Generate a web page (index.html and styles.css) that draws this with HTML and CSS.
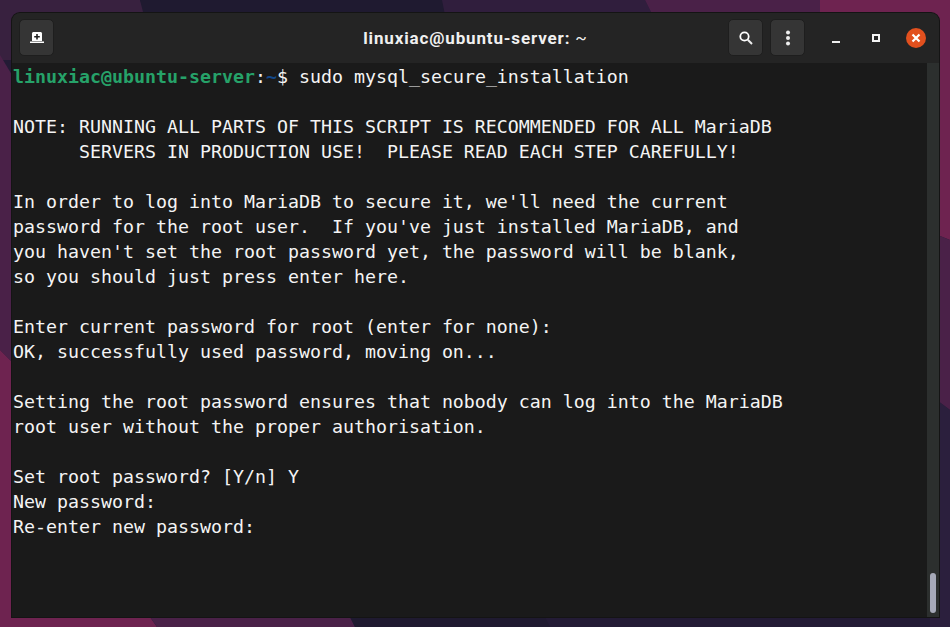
FILE: index.html
```html
<!DOCTYPE html>
<html lang="en">
<head>
<meta charset="utf-8">
<title>linuxiac@ubuntu-server: ~</title>
<link rel="stylesheet" href="styles.css">
</head>
<body>
<svg class="backdrop" width="950" height="627" viewBox="0 0 950 627">
  <rect width="950" height="627" fill="#231b35"/>
  <path fill="#38213f" d="M0 0H140L155 40V60H0z"/>
  <path fill="#1f1a30" d="M140 0H442L470 40V60H155z"/>
  <path fill="#301e3d" d="M442 0H645L665 40H450z"/>
  <path fill="#4a2148" d="M645 0H820L825 40H665z"/>
  <path fill="#6e2350" d="M820 0H950V240L930 232H820z"/>
  <path fill="#4a2148" d="M930 232L950 240V410L930 395z"/>
  <path fill="#2b1f3d" d="M930 395L950 410V627H930z"/>
  <path fill="#4a2148" d="M0 55L15 80V365L0 350z"/>
  <path fill="#6e2350" d="M0 350L15 365V617H150L157 627H0z"/>
  <path fill="#4a2148" d="M150 617H350L355 627H157z"/>
  <path fill="#1f1a30" d="M350 617H545L550 627H355z"/>
</svg>
<main class="window">
  <header class="titlebar">
    <button class="tool-btn" aria-label="New tab">
      <svg width="16" height="16" viewBox="0 0 16 16"><path fill="#fff" d="M3 3.500C3 2.700 3.700 2 4.500 2h7c.8 0 1.500.7 1.500 1.500V11H3z"/><path fill="#fff" d="M1 11.500h14V13H1z"/><path fill="#222" d="M7.200 4h1.600v2h2v1.600h-2v2H7.200v-2h-2V6h2z"/></svg>
    </button>
    <h1 class="title">linuxiac@ubuntu-server: <span class="title-tilde">~</span></h1>
    <div class="actions">
      <button class="tool-btn" aria-label="Search">
        <svg width="16" height="16" viewBox="0 0 16 16"><circle cx="6.500" cy="6.500" r="4.200" fill="none" stroke="#fff" stroke-width="1.800"/><path d="M9.800 9.800l4.200 4.200" stroke="#eee" stroke-width="2" fill="none"/></svg>
      </button>
      <button class="tool-btn" aria-label="Menu">
        <svg width="16" height="16" viewBox="0 0 16 16"><circle cx="8" cy="2.500" r="2" fill="#eee"/><circle cx="8" cy="8" r="2" fill="#eee"/><circle cx="8" cy="13.500" r="2" fill="#eee"/></svg>
      </button>
    </div>
    <div class="win-controls">
      <span class="win-min"></span>
      <span class="win-max"></span>
      <span class="win-close">
        <svg width="10" height="10" viewBox="0 0 10 10"><path d="M1.500 1.500l7 7M8.500 1.500l-7 7" stroke="#fff" stroke-width="2.200"/></svg>
      </span>
    </div>
  </header>
  <section class="terminal">
<pre class="output"><span class="prompt-user">linuxiac@ubuntu-server</span>:<span class="prompt-path">~</span>$ sudo mysql_secure_installation

NOTE: RUNNING ALL PARTS OF THIS SCRIPT IS RECOMMENDED FOR ALL MariaDB
      SERVERS IN PRODUCTION USE!  PLEASE READ EACH STEP CAREFULLY!

In order to log into MariaDB to secure it, we'll need the current
password for the root user.  If you've just installed MariaDB, and
you haven't set the root password yet, the password will be blank,
so you should just press enter here.

Enter current password for root (enter for none):
OK, successfully used password, moving on...

Setting the root password ensures that nobody can log into the MariaDB
root user without the proper authorisation.

Set root password? [Y/n] Y
New password:
Re-enter new password:</pre>
    <div class="scrollbar"><span class="thumb"></span></div>
  </section>
</main>
</body>
</html>
```
FILE: styles.css
```css
* { box-sizing: border-box; }
html, body { margin: 0; height: 100%; overflow: hidden; }
body { position: relative; width: 950px; height: 627px; padding: 13px 11px 10px 12px; background: #231b35; }
.backdrop { position: absolute; left: 0; top: 0; display: block; }
.window { position: relative; display: flex; flex-direction: column; width: 927px; height: 604px; border-radius: 8px 8px 0 0; overflow: hidden; background: #1a1a1a; box-shadow: 0 0 0 1px #141414; }
.titlebar { display: flex; align-items: center; flex: 0 0 50px; padding: 6px 13px 7px 7px; background: #242424; }
.tool-btn { display: flex; align-items: center; justify-content: center; width: 35px; height: 37px; padding: 0; background: #353535; border: 1px solid #1e1e1e; border-radius: 5px; }
.title { position: absolute; left: 0; right: 0; top: 15px; margin: 0; text-align: center; font: 700 17px/20px Roboto, "Liberation Sans", sans-serif; letter-spacing: .85px; color: #f0f0f0; }
.title-tilde { font-weight: 400; }
.actions { display: flex; gap: 7px; margin-left: auto; position: relative; }
.win-controls { display: flex; align-items: center; margin-left: 27px; position: relative; }
.win-min { width: 8px; height: 2px; margin: 9px 32px 0 0; background: #eee; }
.win-max { width: 8px; height: 8px; margin-right: 26px; border: 2px solid #f4f4f4; }
.win-close { display: flex; align-items: center; justify-content: center; width: 20px; height: 20px; border-radius: 50%; background: #e2501e; }
.terminal { position: relative; display: flex; flex: 1; min-height: 0; }
.output { flex: 1; margin: 0; padding: 1px 0 0 1px; font: 18.27px/25px "DejaVu Sans Mono", monospace; color: #f4f4f4; white-space: pre; overflow: hidden; }
.prompt-user { color: #26a269; font-weight: 700; }
.prompt-path { color: #12488b; font-weight: 700; }
.scrollbar { flex: 0 0 12px; position: relative; background: #2c2f2e; }
.thumb { position: absolute; left: 3px; right: 3px; bottom: 4px; height: 40px; background: #a6a9b8; border-radius: 3px; }
```
